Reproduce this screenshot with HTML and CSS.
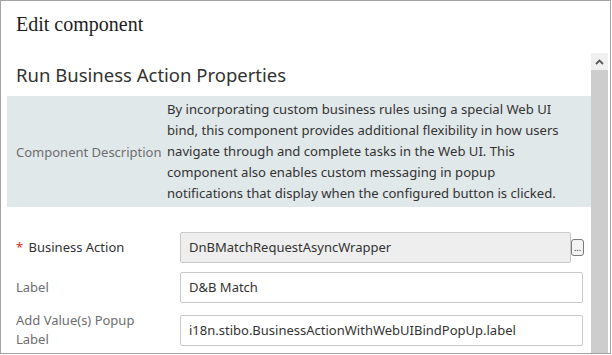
FILE: index.html
```html
<!DOCTYPE html>
<html>
<head>
<meta charset="utf-8">
<link rel="stylesheet" href="styles.css">
</head>
<body>
<div class="frame">
  <div class="header"><h1 class="title">Edit component</h1></div>
  <div class="body">
    <div class="content">
      <h2 class="section">Run Business Action Properties</h2>
      <div class="desc">
        <div class="desc-label">Component Description</div>
        <div class="desc-text">By incorporating custom business rules using a special Web UI<br>bind, this component provides additional flexibility in how users<br>navigate through and complete tasks in the Web UI. This<br>component also enables custom messaging in popup<br>notifications that display when the configured button is clicked.</div>
      </div>
      <div class="form">
        <div class="row row-first">
          <div class="label label-req"><span class="req">*</span> Business Action</div>
          <div class="field">
            <div class="input input-ro">DnBMatchRequestAsyncWrapper</div>
            <button class="more">...</button>
          </div>
        </div>
        <div class="row">
          <div class="label">Label</div>
          <div class="field"><div class="input input-end">D&amp;B Match</div></div>
        </div>
        <div class="row row-tall">
          <div class="label">Add Value(s) Popup<br>Label</div>
          <div class="field"><div class="input input-end">i18n.stibo.BusinessActionWithWebUIBindPopUp.label</div></div>
        </div>
      </div>
    </div>
    <div class="scrollbar">
      <div class="sb-up">
        <svg width="9" height="6" viewBox="0 0 9 6"><path d="M1 5 L4.5 1.5 L8 5" fill="none" stroke="#5a5a5a" stroke-width="1.8"/></svg>
      </div>
      <div class="sb-thumb"></div>
    </div>
  </div>
</div>
</body>
</html>
```
FILE: styles.css
```css
html, body {
  margin: 0;
  padding: 0;
  background: #ffffff;
}
body {
  font-family: "Noto Sans", "Open Sans", sans-serif;
  color: #333333;
}
.frame {
  box-sizing: border-box;
  width: 611px;
  height: 354px;
  border: 1px solid #a3a3a3;
  display: flex;
  flex-direction: column;
  overflow: hidden;
}
.header {
  height: 52px;
  flex: none;
  padding-left: 15px;
}
.title {
  margin: 0;
  padding-top: 9px;
  font-family: "Liberation Serif", serif;
  font-weight: normal;
  font-size: 20px;
  line-height: 28px;
  color: #1e1e1e;
}
.body {
  flex: 1;
  display: flex;
  min-height: 0;
  margin-right: 2px;
}
.content {
  flex: 1;
  padding-left: 6px;
  min-width: 0;
}
.section {
  margin: 0;
  padding: 10px 0 9px 9px;
  font-weight: normal;
  font-size: 18.5px;
  line-height: 24px;
  color: #333333;
}
.desc {
  display: grid;
  grid-template-columns: 151px 1fr;
  align-items: center;
  background: #e1e8ea;
  padding: 3px 0 3px 9px;
  height: 111px;
  box-sizing: border-box;
}
.desc-label {
  font-size: 13px;
  color: #6e6e6e;
}
.desc-text {
  font-size: 13.1px;
  line-height: 21px;
  color: #333333;
  white-space: nowrap;
}
.form {
  padding: 25px 8px 0 9px;
}
.row {
  display: flex;
  align-items: center;
  min-height: 31px;
  margin-bottom: 9px;
}
.row-tall {
  min-height: 40px;
  margin-top: -2px;
}
.label {
  width: 164px;
  flex: none;
  font-size: 13px;
  line-height: 19px;
  color: #6e6e6e;
}
.label-req {
  color: #333333;
}
.req {
  color: #d9302c;
  margin-right: 2px;
}
.field {
  flex: 1;
  display: flex;
  align-items: center;
}
.input {
  flex: 1;
  box-sizing: border-box;
  height: 31px;
  border: 1px solid #cacaca;
  border-radius: 2px;
  padding: 0 8px;
  font-size: 13px;
  line-height: 29px;
  color: #333333;
  background: #ffffff;
  white-space: nowrap;
  overflow: hidden;
}
.input-ro {
  background: #eeeeee;
}
.more {
  flex: none;
  width: 13px;
  height: 17px;
  margin-left: 0;
  margin-right: -1px;
  padding: 0;
  border: 1px solid #7a7a7a;
  border-radius: 3px;
  background: #f3f3f3;
  font-family: "Noto Sans", sans-serif;
  font-size: 9px;
  line-height: 12px;
  color: #222222;
  text-align: center;
}
.scrollbar {
  width: 17px;
  flex: none;
  display: flex;
  flex-direction: column;
}
.sb-up {
  height: 17px;
  background: #f0f0f0;
  display: flex;
  align-items: center;
  justify-content: center;
}
.sb-thumb {
  flex: 1;
  background: #cdcdcd;
}
```
